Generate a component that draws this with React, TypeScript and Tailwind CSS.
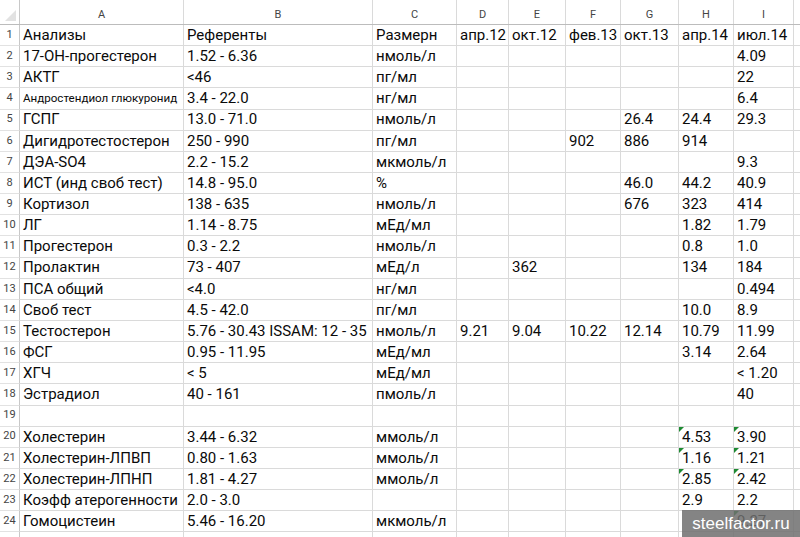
import React from "react";

type Row = { n: number; a: string; b: string; c: string; v: string[]; flag?: boolean[]; small?: boolean };

const rows: Row[] = [
  { n: 1, a: "Анализы", b: "Референты", c: "Размерн", v: ["апр.12", "окт.12", "фев.13", "окт.13", "апр.14", "июл.14"] },
  { n: 2, a: "17-ОН-прогестерон", b: "1.52 - 6.36", c: "нмоль/л", v: ["", "", "", "", "", "4.09"] },
  { n: 3, a: "АКТГ", b: "<46", c: "пг/мл", v: ["", "", "", "", "", "22"] },
  { n: 4, a: "Андростендиол глюкуронид", b: "3.4 - 22.0", c: "нг/мл", v: ["", "", "", "", "", "6.4"], small: true },
  { n: 5, a: "ГСПГ", b: "13.0 - 71.0", c: "нмоль/л", v: ["", "", "", "26.4", "24.4", "29.3"] },
  { n: 6, a: "Дигидротестостерон", b: "250 - 990", c: "пг/мл", v: ["", "", "902", "886", "914", ""] },
  { n: 7, a: "ДЭА-SO4", b: "2.2 - 15.2", c: "мкмоль/л", v: ["", "", "", "", "", "9.3"] },
  { n: 8, a: "ИСТ (инд своб тест)", b: "14.8 - 95.0", c: "%", v: ["", "", "", "46.0", "44.2", "40.9"] },
  { n: 9, a: "Кортизол", b: "138 - 635", c: "нмоль/л", v: ["", "", "", "676", "323", "414"] },
  { n: 10, a: "ЛГ", b: "1.14 - 8.75", c: "мЕд/мл", v: ["", "", "", "", "1.82", "1.79"] },
  { n: 11, a: "Прогестерон", b: "0.3 - 2.2", c: "нмоль/л", v: ["", "", "", "", "0.8", "1.0"] },
  { n: 12, a: "Пролактин", b: "73 - 407", c: "мЕд/л", v: ["", "362", "", "", "134", "184"] },
  { n: 13, a: "ПСА общий", b: "<4.0", c: "нг/мл", v: ["", "", "", "", "", "0.494"] },
  { n: 14, a: "Своб тест", b: "4.5 - 42.0", c: "пг/мл", v: ["", "", "", "", "10.0", "8.9"] },
  { n: 15, a: "Тестостерон", b: "5.76 - 30.43 ISSAM: 12 - 35", c: "нмоль/л", v: ["9.21", "9.04", "10.22", "12.14", "10.79", "11.99"] },
  { n: 16, a: "ФСГ", b: "0.95 - 11.95", c: "мЕд/мл", v: ["", "", "", "", "3.14", "2.64"] },
  { n: 17, a: "ХГЧ", b: "< 5", c: "мЕд/мл", v: ["", "", "", "", "", "< 1.20"] },
  { n: 18, a: "Эстрадиол", b: "40 - 161", c: "пмоль/л", v: ["", "", "", "", "", "40"] },
  { n: 19, a: "", b: "", c: "", v: ["", "", "", "", "", ""] },
  { n: 20, a: "Холестерин", b: "3.44 - 6.32", c: "ммоль/л", v: ["", "", "", "", "4.53", "3.90"], flag: [false, false, false, false, true, true] },
  { n: 21, a: "Холестерин-ЛПВП", b: "0.80 - 1.63", c: "ммоль/л", v: ["", "", "", "", "1.16", "1.21"], flag: [false, false, false, false, true, true] },
  { n: 22, a: "Холестерин-ЛПНП", b: "1.81 - 4.27", c: "ммоль/л", v: ["", "", "", "", "2.85", "2.42"], flag: [false, false, false, false, true, true] },
  { n: 23, a: "Коэфф атерогенности", b: "2.0 - 3.0", c: "", v: ["", "", "", "", "2.9", "2.2"] },
  { n: 24, a: "Гомоцистеин", b: "5.46 - 16.20", c: "мкмоль/л", v: ["", "", "", "", "", "9.27"], flag: [false, false, false, false, false, true] },
];

const cols = "grid grid-cols-[20px_164px_189px_84px_52px_57px_55px_58px_55px_60px_1fr]";
const letters = ["A", "B", "C", "D", "E", "F", "G", "H", "I"];

const Cell = ({ text, flag, small }: { text: string; flag?: boolean; small?: boolean }) => (
  <div className="relative h-[21.15px] border-r border-b border-[#dadada] pl-[3px] flex items-center overflow-visible whitespace-nowrap">
    {flag && (
      <span className="absolute left-0 top-0 w-0 h-0 border-t-[5px] border-t-[#1e8a32] border-r-[5px] border-r-transparent" />
    )}
    <span className={small ? "text-[11.6px]" : "text-[15px]"}>{text}</span>
  </div>
);

export default function App() {
  return (
    <div
      className="relative w-[800px] h-[537px] overflow-hidden bg-white text-[#0a0a0a]"
      style={{ fontFamily: "Roboto, 'Noto Sans', sans-serif" }}
    >
      <div className={`${cols} h-[25px] border-b border-[#bcbcbc]`}>
        <div className="relative border-r border-[#c8c8c8]">
          <span className="absolute right-[3px] bottom-[3px] w-0 h-0 border-b-[11px] border-b-[#e2e2e2] border-l-[11px] border-l-transparent" />
        </div>
        {letters.map((l) => (
          <div key={l} className="flex items-end justify-center pb-[1px] border-r border-[#dadada] text-[11px] text-[#444]">
            {l}
          </div>
        ))}
        <div />
      </div>
      {rows.map((r) => (
        <div key={r.n} className={cols}>
          <div className="h-[21.15px] flex items-center justify-center border-r border-b border-[#c8c8c8] border-b-[#e2e2e2] text-[11px] text-[#444]">
            {r.n}
          </div>
          <Cell text={r.a} small={r.small} />
          <Cell text={r.b} />
          <Cell text={r.c} />
          {r.v.map((x, i) => (
            <Cell key={i} text={x} flag={r.flag?.[i]} />
          ))}
          <div className="border-b border-[#dadada]" />
        </div>
      ))}
      <div className={cols}>
        <div className="h-[21px] border-r border-[#c8c8c8]" />
        {letters.map((l) => (
          <div key={l} className="border-r border-[#dadada]" />
        ))}
      </div>
      <div className="absolute right-0 bottom-0 w-[118px] h-[27px] bg-[#6e6e6e]/85 flex items-center justify-center text-white text-[17px]" style={{ fontFamily: "'Liberation Sans', Arial, sans-serif" }}>
        steelfactor.ru
      </div>
    </div>
  );
}
